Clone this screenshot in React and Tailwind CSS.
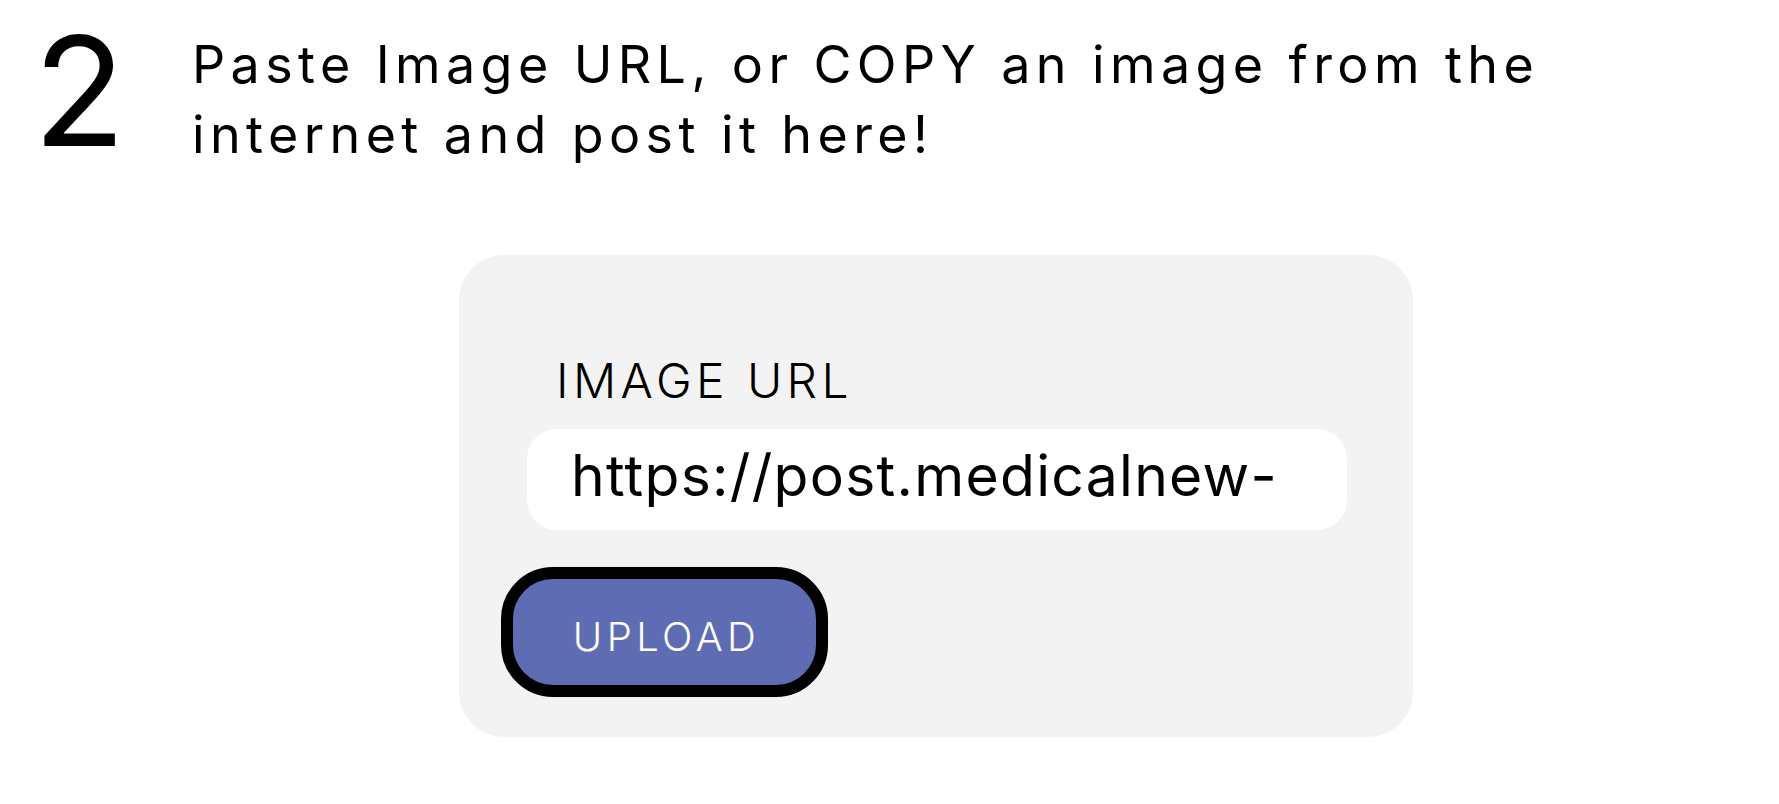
import React from "react";

const font = "font-['Inter','Noto_Sans',sans-serif]";

export default function App() {
  return (
    <div className={`min-h-screen w-full bg-white text-black ${font}`}>
      {/* Step header */}
      <div className="flex items-start pt-[15px] pl-[33px]">
        <div className="w-[159px] text-[152px] leading-none font-normal">2</div>
        <h1 className="mt-[15px] text-[52px] leading-[70px] font-normal tracking-[5.4px] whitespace-nowrap">
          Paste Image URL, or COPY an image from the
          <br />
          internet and post it here!
        </h1>
      </div>

      {/* Upload card */}
      <div className="ml-[459px] mt-[85px] w-[954px] h-[482px] rounded-[45px] bg-[#f3f3f3] pt-[102px] flex flex-col items-start">
        <label className="ml-[97px] text-[48px] leading-none font-light tracking-[4.4px]">
          IMAGE URL
        </label>

        <div className="ml-[68px] mt-[24px] w-[820px] h-[101px] rounded-[30px] bg-white pl-[44px] pt-[18px]">
          <div className="text-[57px] leading-none font-normal tracking-[1.3px] whitespace-nowrap">
            https://post.medicalnew-
          </div>
        </div>

        <button className="ml-[42px] mt-[37px] w-[327px] h-[130px] rounded-[52px] border-[12px] border-black bg-[#5e6db3] flex items-center justify-center pt-[9px] pl-[4px]">
          <span className="text-[40px] leading-none font-light tracking-[4.4px] text-white">UPLOAD</span>
        </button>
      </div>
    </div>
  );
}
